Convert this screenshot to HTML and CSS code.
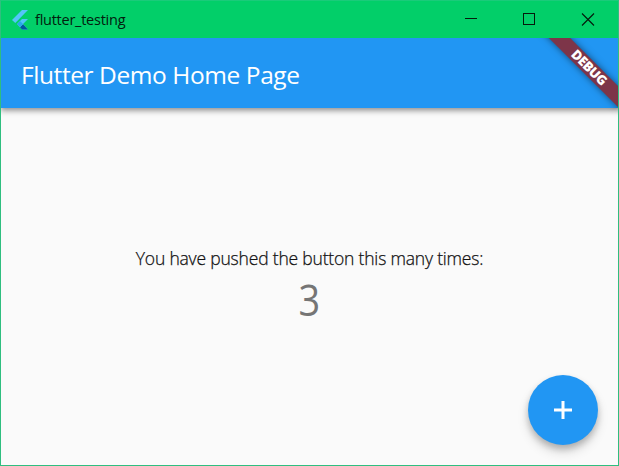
FILE: index.html
```html
<!DOCTYPE html>
<html lang="en">
<head>
<meta charset="utf-8">
<title>flutter_testing</title>
<link rel="stylesheet" href="styles.css">
</head>
<body>
<div class="window">
  <header class="titlebar">
    <svg class="logo" width="18" height="22" viewBox="0 0 18 22">
      <path d="M11 1h6L4.300 14 1 11z" fill="#54c5f8"/>
      <path d="M11 10h6l-5 5 5 5.500h-6l-5-5.500z" fill="#4fc3f7"/>
      <path d="M9 18.200l3-3 5 5.300h-6z" fill="#01579b"/>
      <path d="M6 15l3-3 3 3-3 3z" fill="#29a9e6"/>
    </svg>
    <span class="caption">flutter_testing</span>
    <div class="controls">
      <svg width="58" height="37" shape-rendering="crispEdges"><path d="M24 17.5h12" stroke="#061b0c"/></svg>
      <svg width="59" height="37" shape-rendering="crispEdges"><path d="M24.5 12.5h11v11h-11z" fill="none" stroke="#061b0c"/></svg>
      <svg width="60" height="37"><path d="M24 12.500l12 12M36 12.500l-12 12" stroke="#061b0c" stroke-width="1.1"/></svg>
    </div>
  </header>
  <main class="app">
    <div class="appbar"><h1>Flutter Demo Home Page</h1></div>
    <section class="content">
      <p class="message">You have pushed the button this many times:</p>
      <p class="count">3</p>
    </section>
    <button class="fab" aria-label="Increment">
      <svg width="30" height="30" viewBox="0 0 30 30"><path d="M15 6v18M6 15h18" stroke="#fff" stroke-width="3"/></svg>
    </button>
    <div class="banner"><span>DEBUG</span></div>
  </main>
</div>
</body>
</html>
```
FILE: styles.css
```css
* { box-sizing: border-box; margin: 0; }
body { font-family: "Open Sans", "Noto Sans", sans-serif; }
.window {
  display: flex;
  flex-direction: column;
  width: 619px;
  height: 466px;
  border: 1px solid #2fbe7f;
  border-top-color: #1acb7a;
  background: #fafafa;
  overflow: hidden;
}
.titlebar {
  display: flex;
  align-items: center;
  height: 37px;
  flex: none;
  background: #02cf69;
  color: #03200e;
}
.logo { margin-left: 10px; }
.caption { margin-left: 6px; font-size: 14.5px; letter-spacing: -0.25px; }
.controls { display: flex; margin-left: auto; }
.app {
  position: relative;
  display: flex;
  flex-direction: column;
  flex: 1;
  overflow: hidden;
}
.appbar {
  display: flex;
  align-items: center;
  height: 70px;
  flex: none;
  padding: 2px 20px 0;
  background: #2196f3;
  box-shadow: 0 2px 5px rgba(0, 0, 0, .32), 0 4px 6px rgba(0, 0, 0, .14);
  color: #fff;
}
h1 { font-size: 24.5px; font-weight: 400; letter-spacing: -0.42px; white-space: nowrap; }
.content {
  display: flex;
  flex-direction: column;
  flex: 1;
  align-items: center;
  justify-content: center;
  white-space: nowrap;
}
.message { font-size: 17.5px; line-height: 24px; font-weight: 300; color: #111; letter-spacing: -0.19px; -webkit-text-stroke: 0.25px #111; }
.count { padding-top: 2px; font-size: 43px; line-height: 56px; font-weight: 400; color: #757575; transform: scaleX(.88); }
.fab {
  position: absolute;
  right: 20px;
  bottom: 20px;
  display: flex;
  align-items: center;
  justify-content: center;
  width: 70px;
  height: 70px;
  padding: 0;
  border: 0;
  border-radius: 50%;
  background: #2196f3;
  box-shadow: 0 4px 6px rgba(0, 0, 0, .2), 0 7px 12px rgba(0, 0, 0, .14);
}
.banner {
  position: absolute;
  left: 507.5px;
  top: 22px;
  display: flex;
  align-items: center;
  justify-content: center;
  width: 160px;
  height: 15px;
  background: #7d3549;
  box-shadow: 0 0 7px rgba(0, 0, 0, .5);
  color: #fff;
  font-size: 13.3px;
  line-height: 15px;
  font-weight: 800;
  letter-spacing: -0.4px;
  transform: rotate(45deg);
}
```
